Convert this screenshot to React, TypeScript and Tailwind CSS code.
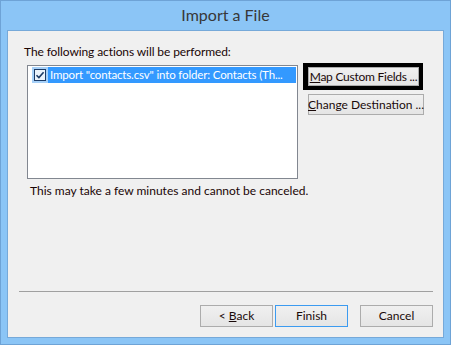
import React from 'react';

const font = { fontFamily: 'Lato, "Noto Sans", sans-serif' };

const Btn: React.FC<{ children: React.ReactNode; className?: string; primary?: boolean }> = ({
  children,
  className = '',
  primary,
}) => (
  <button
    className={`flex items-center justify-center whitespace-nowrap border bg-gradient-to-b from-[#f0f0f0] to-[#e5e5e5] text-[12px] text-[#1a0a0a] ${
      primary ? 'border-[#3c9bf0]' : 'border-[#acacac]'
    } ${className}`}
  >
    {children}
  </button>
);

export default function App() {
  return (
    <div
      className="flex h-[345px] w-[451px] flex-col border border-[#6ea3d6] bg-[#8bc5f6] px-[6px] pb-[6px]"
      style={font}
    >
      {/* title bar */}
      <div className="flex h-[29px] items-center justify-center pb-[1px] text-[16px] text-[#383838]">
        Import a File
      </div>

      {/* client area */}
      <div className="flex flex-1 flex-col border border-[#76a9d9] bg-[#f0f0f0]">
        <div className="flex">
          <div className="ml-[16px] flex w-[273px] flex-col pt-[13px]">
            <div className="h-[16px] whitespace-nowrap text-[12px] leading-[16px] tracking-[-0.1px] text-[#1a0505]">
              The following actions will be performed:
            </div>
            <div className="ml-[3px] mt-[5px] h-[114px] w-[271px] border border-[#828790] bg-white pl-[4px] pr-[1px] pt-[1px]">
              <div className="flex h-[16px] items-center">
                <div className="flex h-[16px] w-[16px] items-center justify-center bg-[#a6d0f8]">
                  <svg width="12" height="12" viewBox="0 0 12 12">
                    <rect x="0.5" y="0.5" width="11" height="11" fill="#eaf3fc" stroke="#1c3b66" />
                    <path d="M2.5 6.2 L4.9 8.6 L9.6 3.2" fill="none" stroke="#1c3b66" strokeWidth="1.6" />
                  </svg>
                </div>
                <div className="flex h-[16px] min-w-0 flex-1 items-center overflow-hidden whitespace-nowrap bg-[#3399ff] pl-[2px] text-[11.5px] tracking-[-0.15px] text-white">
                  Import "contacts.csv" into folder: Contacts (Th...
                </div>
              </div>
            </div>
            <div className="ml-[6px] mt-[4px] h-[16px] whitespace-nowrap text-[12px] leading-[16px] text-[#1a0505]">
              This may take a few minutes and cannot be canceled.
            </div>
          </div>

          <div className="ml-[6px] mt-[32px] flex flex-col">
            <div className="h-[27px] w-[120px] border-[4px] border-l-[5px] border-black">
              <Btn className="h-full w-full tracking-[-0.25px]">
                <span>
                  <span className="underline">M</span>ap Custom Fields ...
                </span>
              </Btn>
            </div>
            <Btn className="ml-[5px] mt-[4px] h-[21px] w-[116px]">
              <span>
                <span className="underline">C</span>hange Destination ...
              </span>
            </Btn>
          </div>
        </div>

        <div className="flex-1" />

        <div className="ml-[11px] mr-[10px] h-px bg-[#a0a0a0]" />

        <div className="mb-[10px] mr-[10px] mt-[13px] flex justify-end">
          <Btn className="h-[22px] w-[73px]">
            <span>
              &lt; <span className="underline">B</span>ack
            </span>
          </Btn>
          <Btn primary className="ml-[2px] h-[22px] w-[73px]">
            Finish
          </Btn>
          <Btn className="ml-[12px] h-[22px] w-[73px]">Cancel</Btn>
        </div>
      </div>
    </div>
  );
}
